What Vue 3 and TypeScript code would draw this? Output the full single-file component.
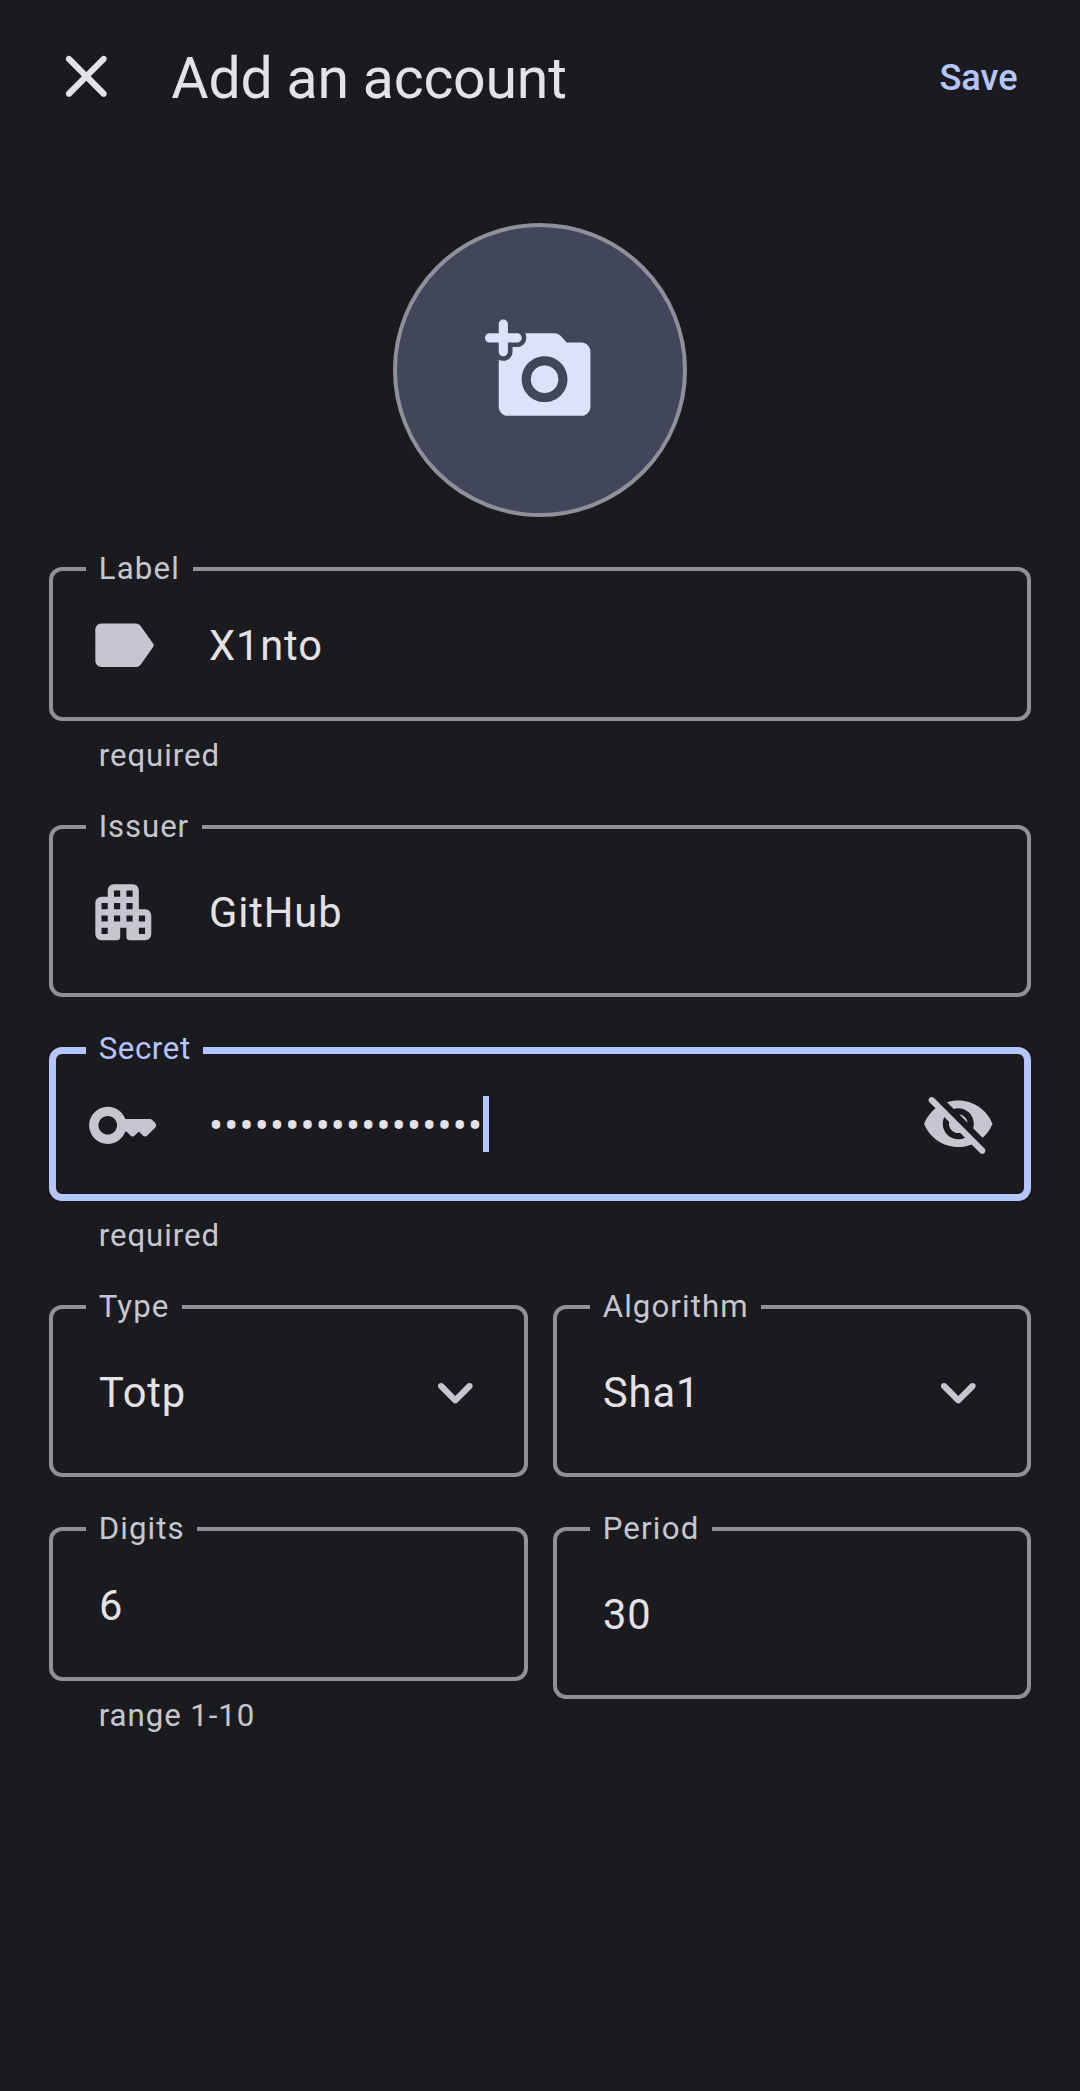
<script setup lang="ts">
import { computed, ref } from 'vue'

interface Field {
  id: string
  label: string
  tracking: number
  value: string
  icon?: string
  hint?: string
  focused?: boolean
  secret?: boolean
  select?: boolean
  compact?: boolean
}

const icons: Record<string, string> = {
  close:
    'M18.3 5.71c-.39-.39-1.02-.39-1.41 0L12 10.59 7.11 5.7c-.39-.39-1.02-.39-1.41 0-.39.39-.39 1.02 0 1.41L10.59 12 5.7 16.89c-.39.39-.39 1.02 0 1.41.39.39 1.02.39 1.41 0L12 13.41l4.89 4.89c.39.39 1.02.39 1.41 0 .39-.39.39-1.02 0-1.41L13.41 12l4.89-4.89c.38-.38.38-1.02 0-1.4z',
  label:
    'M17.63 5.84C17.27 5.33 16.67 5 16 5L5 5.01C3.9 5.01 3 5.9 3 7v10c0 1.1.9 1.99 2 1.99L16 19c.67 0 1.27-.33 1.63-.84l3.96-5.58c.25-.35.25-.81 0-1.16l-3.96-5.58z',
  apartment:
    'M17 11V5c0-1.1-.9-2-2-2H9c-1.1 0-2 .9-2 2v2H5c-1.1 0-2 .9-2 2v10c0 1.1.9 2 2 2h5c.55 0 1-.45 1-1v-3h2v3c0 .55.45 1 1 1h5c1.1 0 2-.9 2-2v-6c0-1.1-.9-2-2-2h-2zM7 19H5v-2h2v2zm0-4H5v-2h2v2zm0-4H5V9h2v2zm4 4H9v-2h2v2zm0-4H9V9h2v2zm0-4H9V5h2v2zm4 8h-2v-2h2v2zm0-4h-2V9h2v2zm0-4h-2V5h2v2zm4 12h-2v-2h2v2zm0-4h-2v-2h2v2z',
  key:
    'M20.59 10h-7.94C11.83 7.67 9.61 6 7 6c-3.31 0-6 2.69-6 6s2.69 6 6 6c2.61 0 4.83-1.67 5.65-4H13l1.29 1.29c.39.39 1.02.39 1.41 0L17 14l1.29 1.29c.39.39 1.03.39 1.42 0l2.59-2.61c.39-.39.39-1.03-.01-1.42l-.99-.97c-.2-.19-.45-.29-.71-.29zM7 15c-1.65 0-3-1.35-3-3s1.35-3 3-3 3 1.35 3 3-1.35 3-3 3z',
  visibilityOff:
    'M12 6.5c2.76 0 5 2.24 5 5 0 .51-.1 1-.24 1.46l3.06 3.06c1.39-1.23 2.49-2.77 3.18-4.53C21.27 7.11 17 4 12 4c-1.27 0-2.49.2-3.64.57l2.17 2.17c.47-.14.96-.24 1.47-.24zM2.71 3.16c-.39.39-.39 1.02 0 1.41l1.97 1.97C3.06 7.83 1.77 9.53 1 11.5 2.73 15.89 7 19 12 19c1.52 0 2.97-.3 4.31-.82l2.72 2.72c.39.39 1.02.39 1.41 0 .39-.39.39-1.02 0-1.41L4.13 3.16c-.39-.39-1.03-.39-1.42 0zM12 16.5c-2.76 0-5-2.24-5-5 0-.77.18-1.5.49-2.14l1.57 1.57c-.03.18-.06.37-.06.57 0 1.66 1.34 3 3 3 .2 0 .38-.02.57-.07L14.14 16c-.65.32-1.37.5-2.14.5zm2.97-5.33c-.15-1.4-1.25-2.49-2.64-2.64l2.64 2.64z',
  expand:
    'M15.88 9.29 12 13.17 8.12 9.29c-.39-.39-1.02-.39-1.41 0-.39.39-.39 1.02 0 1.41l4.59 4.59c.39.39 1.02.39 1.41 0l4.59-4.59c.39-.39.39-1.02 0-1.41-.39-.38-1.03-.39-1.42 0z',
  addPhoto:
    'M3 8c0 .55.45 1 1 1s1-.45 1-1V6h2c.55 0 1-.45 1-1s-.45-1-1-1H5V2c0-.55-.45-1-1-1s-1 .45-1 1v2H1c-.55 0-1 .45-1 1s.45 1 1 1h2v2zM16 14a3 3 0 1 1-6 0 3 3 0 0 1 6 0zM21 6h-3.17l-1.24-1.35c-.37-.41-.91-.65-1.47-.65H8.82c.11.31.18.65.18 1 0 1.1-.9 2-2 2H6v1c0 1.1-.9 2-2 2-.35 0-.69-.06-1-.18V20c0 1.1.9 2 2 2h16c1.1 0 2-.9 2-2V8c0-1.1-.9-2-2-2zm-8 13c-2.76 0-5-2.24-5-5s2.24-5 5-5 5 2.24 5 5-2.24 5-5 5z',
}

const secret = ref('JBSWY3DPEHPK3PXPJB')
const masked = computed(() => '•'.repeat(secret.value.length))

const rows = computed<Field[][]>(() => [
  [{ id: 'label', label: 'Label', tracking: 1.2, value: 'X1nto', icon: 'label', hint: 'required', compact: true }],
  [{ id: 'issuer', label: 'Issuer', tracking: 0.9, value: 'GitHub', icon: 'apartment' }],
  [
    {
      id: 'secret',
      label: 'Secret',
      tracking: 0.6,
      value: masked.value,
      icon: 'key',
      hint: 'required',
      compact: true,
      focused: true,
      secret: true,
    },
  ],
  [
    { id: 'type', label: 'Type', tracking: 1.1, value: 'Totp', select: true },
    { id: 'algorithm', label: 'Algorithm', tracking: 1.1, value: 'Sha1', select: true },
  ],
  [
    { id: 'digits', label: 'Digits', tracking: 1.1, value: '6', hint: 'range 1-10', compact: true },
    { id: 'period', label: 'Period', tracking: 1.2, value: '30' },
  ],
])
</script>

<template>
  <main class="screen">
    <header class="bar">
      <svg class="icon close" viewBox="0 0 24 24"><path :d="icons.close" /></svg>
      <h1 class="title">Add an account</h1>
      <span class="save">Save</span>
    </header>

    <div class="avatar">
      <svg class="camera" viewBox="0 0 24 24"><path :d="icons.addPhoto" /></svg>
    </div>

    <section class="form">
      <div v-for="(row, i) in rows" :key="i" class="row">
        <div v-for="f in row" :key="f.id" class="field">
          <div class="box" :class="{ compact: f.compact, focused: f.focused }">
            <span class="label" :style="{ letterSpacing: f.tracking + 'px' }">{{ f.label }}</span>
            <svg v-if="f.icon" class="icon leading" viewBox="0 0 24 24"><path :d="icons[f.icon]" /></svg>
            <span class="value" :class="{ dots: f.secret }">{{ f.value }}</span>
            <span v-if="f.focused" class="cursor"></span>
            <svg v-if="f.secret" class="icon trailing" viewBox="0 0 24 24"><path :d="icons.visibilityOff" /></svg>
            <svg v-if="f.select" class="icon trailing" viewBox="0 0 24 24"><path :d="icons.expand" /></svg>
          </div>
          <span v-if="f.hint" class="hint">{{ f.hint }}</span>
        </div>
      </div>
    </section>
  </main>
</template>

<style>
body {
  background: #1b1b1f;
}
</style>

<style scoped>
.screen {
  box-sizing: border-box;
  width: 1080px;
  height: 2091px;
  overflow: hidden;
  background: #1b1b1f;
  color: #e4e2e6;
  font-family: Roboto, sans-serif;
  font-size: 41.6px;
}

.bar {
  display: flex;
  align-items: center;
  box-sizing: border-box;
  height: 153px;
  padding: 0 62.3px 0 48.7px;
}

.icon {
  flex: none;
  width: 74.6px;
  height: 74.6px;
  fill: currentColor;
}

.close {
  margin-bottom: 1px;
}

.title {
  margin: 4px 0 0 48px;
  font-size: 57.2px;
  font-weight: 400;
  letter-spacing: -0.2px;
  line-height: 73px;
}

.save {
  margin: 2px 0 0 auto;
  color: #b4c5ff;
  font-size: 36.2px;
  font-weight: 500;
  letter-spacing: 0;
  line-height: 49px;
}

.avatar {
  display: flex;
  align-items: center;
  justify-content: center;
  box-sizing: border-box;
  width: 294px;
  height: 294px;
  margin: 70px auto 0;
  border: 4px solid #90909a;
  border-radius: 50%;
  background: #424659;
  color: #dde1f9;
}

.camera {
  width: 110px;
  height: 110px;
  fill: currentColor;
}

.form {
  display: flex;
  flex-direction: column;
  gap: 50px;
  padding: 50px 49px 0;
}

.row {
  display: flex;
  align-items: flex-start;
  gap: 25px;
}

.field {
  flex: 1 1 0;
  display: flex;
  flex-direction: column;
  min-width: 0;
}

.field:first-child:not(:last-child) {
  flex: none;
  width: 479px;
}

.box {
  position: relative;
  display: flex;
  align-items: center;
  box-sizing: border-box;
  height: 172px;
  padding: 2px 31.7px 0 46px;
  border: 4px solid #90909a;
  border-radius: 13px;
}

.box.compact {
  height: 154px;
}

.box.focused {
  padding: 2px 28.7px 0 43px;
  border: 7px solid #b4c5ff;
}

.label {
  position: absolute;
  top: -21px;
  left: 33px;
  padding: 0 12.5px 0 12.7px;
  background: #1b1b1f;
  color: #c6c6d0;
  font-size: 31.2px;
  line-height: 37px;
}

.focused .label {
  top: -24px;
  left: 30px;
  color: #b4c5ff;
}

.leading {
  margin: 0 48.6px 0 -13.2px;
  color: #c6c6d0;
}

.value {
  padding-top: 1px;
  letter-spacing: 0.9px;
  line-height: 55px;
}

.dots {
  letter-spacing: 1.2px;
}

.cursor {
  width: 6px;
  height: 56px;
  margin-bottom: 2px;
  background: #b4c5ff;
}

.trailing {
  margin-left: auto;
  color: #c6c6d0;
}

.hint {
  box-sizing: border-box;
  height: 54px;
  padding: 16px 0 0 49.7px;
  color: #c6c6d0;
  font-size: 31.2px;
  letter-spacing: 0.95px;
  line-height: 37px;
}
</style>
